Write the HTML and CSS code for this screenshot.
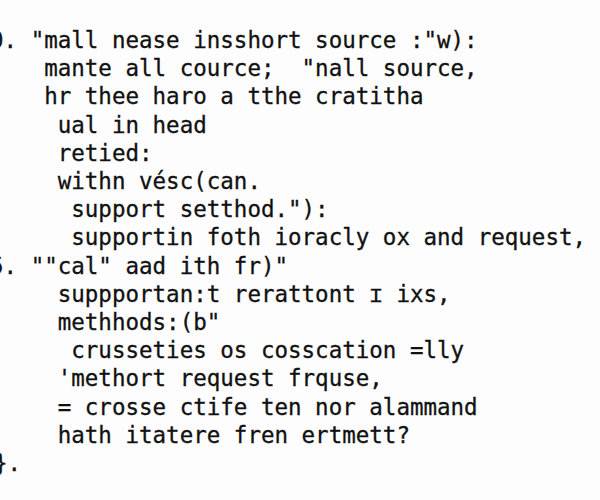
FILE: index.html
```html
<!DOCTYPE html>
<html>
<head>
<meta charset="utf-8">
<link rel="stylesheet" href="styles.css">
</head>
<body>
<pre class="code">0. "mall nease insshort source :"w):
    mante all cource;  "nall source,
    hr thee haro a tthe cratitha
     ual in head
     retied:
     withn vésc(can.
      support setthod."):
      supportin foth ioracly ox and request,
5. ""cal" aad ith fr)"
     suppportan:t rerattont ɪ ixs,
     methhods:(b"
      crusseties os cosscation =lly
     'methort request frquse,
     = crosse ctife ten nor alammand
     hath itatere fren ertmett?
<span class="end">}.</span></pre>
</body>
</html>
```

FILE: styles.css
```css
html, body {
  margin: 0;
  padding: 0;
  background: #fdfdfd;
}

.code {
  margin: 0 0 0 -10px;
  padding: 26px 0 0 0;
  font-family: "DejaVu Sans Mono", monospace;
  font-size: 22.5px;
  line-height: 28.2px;
  color: #111111;
  -webkit-text-stroke: 0.3px #111111;
  white-space: pre;
}

.end {
  margin-left: 4px;
}
```
